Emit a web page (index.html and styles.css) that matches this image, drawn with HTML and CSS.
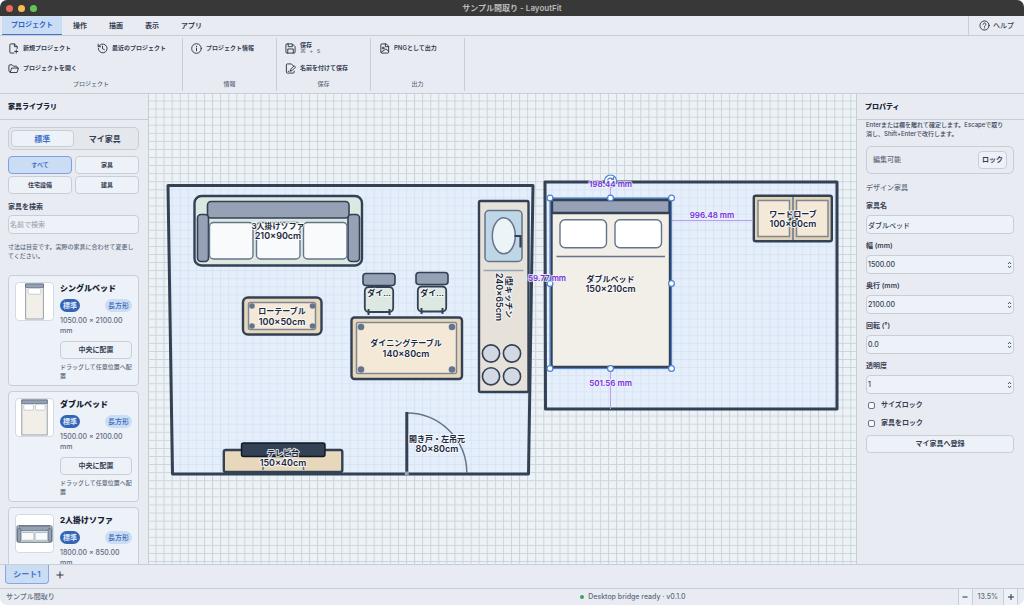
FILE: index.html
```html
<!DOCTYPE html>
<html lang="ja">
<head>
<meta charset="utf-8">
<meta name="viewport" content="width=device-width, initial-scale=1">
<title>サンプル間取り - LayoutFit</title>
<link rel="stylesheet" href="styles.css">
</head>
<body>
<svg class="defs" aria-hidden="true">
  <symbol id="spin" viewBox="0 0 5 8"><path d="M1 3 2.500 1.200 4 3M1 5 2.500 6.800 4 5" fill="none" stroke="#475569" stroke-width="1"/></symbol>
</svg>
<div class="app">
  <header class="titlebar">
    <div class="lights"><i class="light red"></i><i class="light yellow"></i><i class="light green"></i></div>
    <h1 class="window-title">サンプル間取り - LayoutFit</h1>
  </header>

  <nav class="menubar">
    <button class="menu active">プロジェクト</button>
    <button class="menu">操作</button>
    <button class="menu">描画</button>
    <button class="menu">表示</button>
    <button class="menu">アプリ</button>
    <button class="help">
      <svg class="icon" viewBox="0 0 24 24"><circle cx="12" cy="12" r="10"/><path d="M9 9.500a3 3 0 1 1 4.500 2.600c-1 .6-1.500 1-1.500 2M12 17v.5"/></svg>ヘルプ
    </button>
  </nav>

  <section class="ribbon">
    <div class="group wide">
      <div class="tools two">
        <button class="tool"><svg class="icon" viewBox="0 0 24 24"><path d="M20 12V8l-6-6H6a2 2 0 0 0-2 2v16a2 2 0 0 0 2 2h7M14 2v6h6M18 15v7M14.500 18.500h7"/></svg>新規プロジェクト</button>
        <button class="tool"><svg class="icon" viewBox="0 0 24 24"><path d="M3 12a9.500 9.500 0 1 0 3-7L2.500 8M2.500 2.500V8H8M12 7v5.500l4 2"/></svg>最近のプロジェクト</button>
        <button class="tool"><svg class="icon" viewBox="0 0 24 24"><path d="M5 20l3-9h15l-3 9zM5 20a3 3 0 0 1-3-3V6a2 2 0 0 1 2-2h5l3 3h6a2 2 0 0 1 2 2v2"/></svg>プロジェクトを開く</button>
      </div>
      <span class="caption">プロジェクト</span>
    </div>
    <div class="group">
      <div class="tools">
        <button class="tool"><svg class="icon" viewBox="0 0 24 24"><circle cx="12" cy="12" r="10.500"/><path d="M12 11v6M12 7v1"/></svg>プロジェクト情報</button>
      </div>
      <span class="caption">情報</span>
    </div>
    <div class="group">
      <div class="tools">
        <button class="tool"><svg class="icon" viewBox="0 0 24 24"><path d="M5 2h11l6 6v12a2 2 0 0 1-2 2H4a2 2 0 0 1-2-2V4a2 2 0 0 1 2-2zM7 2v6h9V3M6 22v-9h12v9"/></svg><span class="stack">保存<kbd>⌘ + S</kbd></span></button>
        <button class="tool"><svg class="icon" viewBox="0 0 24 24"><path d="M18 6l-4-4H5a2 2 0 0 0-2 2v16a2 2 0 0 0 2 2h13a2 2 0 0 0 2-2v-2M12 17l1-4 7-7 3 3-7 7zM7 18h2"/></svg>名前を付けて保存</button>
      </div>
      <span class="caption">保存</span>
    </div>
    <div class="group">
      <div class="tools">
        <button class="tool"><svg class="icon" viewBox="0 0 24 24"><path d="M15 2H6a2 2 0 0 0-2 2v16a2 2 0 0 0 2 2h13a2 2 0 0 0 2-2V8zM14 2v6h7M5 20l10-7 6 5"/><circle cx="9" cy="11" r="2"/></svg>PNGとして出力</button>
      </div>
      <span class="caption">出力</span>
    </div>
  </section>

  <main class="workspace">
    <aside class="panel library">
      <h2 class="panel-title">家具ライブラリ</h2>
      <div class="library-body">
        <div class="segmented">
          <button class="segment active">標準</button>
          <button class="segment">マイ家具</button>
        </div>
        <div class="filters">
          <button class="filter active">すべて</button>
          <button class="filter">家具</button>
          <button class="filter">住宅設備</button>
          <button class="filter">建具</button>
        </div>
        <div class="search">
          <label for="search">家具を検索</label>
          <input class="input" id="search" type="text" placeholder="名前で検索">
        </div>
        <p class="note">寸法は目安です。実際の家具に合わせて変更してください。</p>
        <div class="cards">
          <article class="card">
            <svg class="thumb" viewBox="0 0 38 38"><rect x="10" y="1" width="18" height="36" fill="#f1efe7" stroke="#64748b" stroke-width=".7"/><rect x="10" y="1" width="18" height="3.500" fill="#94a0b6" stroke="#475569" stroke-width=".6"/><rect x="12.500" y="5.500" width="13" height="6" rx="1.500" fill="#fff" stroke="#94a3b8" stroke-width=".5"/></svg>
            <div class="card-body">
              <h3 class="card-title">シングルベッド</h3>
              <div class="badges"><span class="badge solid">標準</span><span class="badge">長方形</span></div>
              <p class="size">1050.00 × 2100.00 mm</p>
              <button class="button">中央に配置</button>
              <p class="hint">ドラッグして任意位置へ配置</p>
            </div>
          </article>
          <article class="card">
            <svg class="thumb" viewBox="0 0 38 38"><rect x="6" y="1" width="26" height="36" fill="#f1efe7" stroke="#64748b" stroke-width=".7"/><rect x="6" y="1" width="26" height="3.500" fill="#94a0b6" stroke="#475569" stroke-width=".6"/><rect x="8" y="5.500" width="10" height="6" rx="1.500" fill="#fff" stroke="#94a3b8" stroke-width=".5"/><rect x="20" y="5.500" width="10" height="6" rx="1.500" fill="#fff" stroke="#94a3b8" stroke-width=".5"/></svg>
            <div class="card-body">
              <h3 class="card-title">ダブルベッド</h3>
              <div class="badges"><span class="badge solid">標準</span><span class="badge">長方形</span></div>
              <p class="size">1500.00 × 2100.00 mm</p>
              <button class="button">中央に配置</button>
              <p class="hint">ドラッグして任意位置へ配置</p>
            </div>
          </article>
          <article class="card">
            <svg class="thumb" viewBox="0 0 38 38"><rect x="1" y="11" width="36" height="17" rx="1.500" fill="#dce8e1" stroke="#334155" stroke-width=".8"/><g fill="#94a0b6" stroke="#475569" stroke-width=".6"><rect x="3" y="11.500" width="32" height="4.500" rx="1"/><rect x="1.500" y="14" width="3.500" height="13" rx="1"/><rect x="33" y="14" width="3.500" height="13" rx="1"/></g><g fill="#f8fafc" stroke="#94a3b8" stroke-width=".7"><rect x="5.500" y="18" width="13" height="8" rx="1"/><rect x="19.500" y="18" width="13" height="8" rx="1"/></g></svg>
            <div class="card-body">
              <h3 class="card-title">2人掛けソファ</h3>
              <div class="badges"><span class="badge solid">標準</span><span class="badge">長方形</span></div>
              <p class="size">1800.00 × 850.00 mm</p>
              <button class="button">中央に配置</button>
              <p class="hint">ドラッグして任意位置へ配置</p>
            </div>
          </article>
        </div>
      </div>
    </aside>

    <section class="canvas">
      <svg class="plan" role="img" aria-label="間取り図">
        <defs>
          <pattern id="grid" x="155.500" y="100.500" width="8.080" height="8.080" patternUnits="userSpaceOnUse"><path d="M0 .5H8.080M.5 0V8.080" class="grid-line"/></pattern>
        </defs>
        <g transform="translate(-149 -94)">
          <rect x="149" y="94" width="4000" height="3000" fill="url(#grid)"/>
          <path class="room" d="M168 185.500H533L528.500 474H172.500z"/>
          <path class="room" d="M545 182H837V409H545.500z"/>

          <g class="furniture">
            <rect class="mint" x="194.500" y="196" width="167.500" height="69.500" rx="7"/>
            <g class="slate"><rect x="207.500" y="201.500" width="141.500" height="16.500" rx="3.500"/><rect x="197.500" y="214.500" width="11" height="47" rx="3.500"/><rect x="348" y="214.500" width="11.500" height="47" rx="3.500"/></g>
            <g class="cushion"><rect x="209.500" y="222.500" width="43.500" height="36.500" rx="4"/><rect x="256.500" y="222.500" width="43.500" height="36.500" rx="4"/><rect x="303.500" y="222.500" width="43.500" height="36.500" rx="4"/></g>
          </g>

          <g class="furniture">
            <rect class="wood" x="243" y="297.500" width="78.500" height="37" rx="5"/>
            <rect class="top" x="248.500" y="302.500" width="67" height="27" rx="2"/>
            <g class="bolt"><circle cx="252" cy="306" r="2.800"/><circle cx="312.500" cy="306" r="2.800"/><circle cx="252" cy="326" r="2.800"/><circle cx="312.500" cy="326" r="2.800"/></g>
          </g>

          <g class="furniture">
            <rect class="mint thin" x="364.800" y="287" width="28.400" height="25" rx="4"/>
            <rect class="mint thin" x="417.800" y="286.500" width="28.400" height="25" rx="4"/>
            <g class="slate"><rect x="363" y="273.500" width="32" height="12" rx="3"/><rect x="416" y="272.500" width="32" height="12" rx="3"/></g>
            <path class="leg" d="M368.500 309v6M389.500 309v6M421.500 308v6M442.500 308v6"/>
          </g>

          <g class="furniture">
            <rect class="wood" x="351.500" y="317.500" width="110.500" height="61.500" rx="3"/>
            <rect class="top" x="356.500" y="322.500" width="100" height="51" rx="1.500"/>
            <g class="bolt"><circle cx="361" cy="327" r="3.300"/><circle cx="452" cy="327" r="3.300"/><circle cx="361" cy="369.500" r="3.300"/><circle cx="452" cy="369.500" r="3.300"/></g>
          </g>

          <g class="furniture">
            <rect class="stone" x="479" y="201" width="49.500" height="191" rx="1.500"/>
            <rect class="sink" x="485" y="210.500" width="37" height="51" rx="4"/>
            <ellipse class="basin" cx="503.800" cy="235.800" rx="11.500" ry="18"/>
            <path class="faucet" d="M514.500 236H520.500V247.500"/>
            <path class="divide light-line" d="M483.500 270.500H523.500"/>
            <g class="burner"><circle cx="491" cy="353.500" r="8.600"/><circle cx="512" cy="353.500" r="8.600"/><circle cx="491" cy="376.300" r="8.600"/><circle cx="512" cy="376.300" r="8.600"/></g>
          </g>

          <g class="furniture">
            <rect class="bed" x="551.500" y="199.500" width="118.500" height="167.500" rx="2"/>
            <rect class="slate-flat" x="552" y="200" width="117.500" height="13" rx="1"/>
            <g class="cushion pillow"><rect x="560" y="219.800" width="46.500" height="28" rx="5"/><rect x="615" y="219.800" width="46.500" height="28" rx="5"/></g>
            <path class="divide" d="M556.500 256.500H665"/>
          </g>

          <g class="furniture">
            <rect class="wood dark" x="753.800" y="195.800" width="78" height="45.500" rx="2"/>
            <rect class="top" x="758" y="200.500" width="31.500" height="36"/>
            <rect class="top" x="796.500" y="200.500" width="31.500" height="36"/>
            <path class="divide" d="M793 197V240"/>
            <g fill="#334155"><circle cx="790" cy="219" r="1.500"/><circle cx="796.500" cy="219" r="1.500"/></g>
          </g>

          <g class="furniture">
            <rect class="wood" x="223.800" y="450" width="118.500" height="22" rx="2"/>
            <rect class="screen" x="241.500" y="443" width="83.500" height="13.500" rx="2"/>
            <path class="divide" d="M263 465v5M303.500 465v5"/>
          </g>

          <path class="arc" d="M406.800 413A60 60 0 0 1 466.800 473"/>
          <path class="door" d="M406.800 412V473"/>
          <rect x="404.800" y="471.500" width="4" height="4" fill="#94a0b6"/>

          <g class="label">
            <text x="278" y="229">3人掛けソファ</text><text class="measure-text" x="278" y="239">210×90cm</text>
            <text x="282" y="314">ローテーブル</text><text class="measure-text" x="282" y="324.500">100×50cm</text>
            <text x="379" y="296">ダイ…</text><text x="432" y="295.500">ダイ…</text>
            <text x="406" y="346">ダイニングテーブル</text><text class="measure-text" x="406" y="356.500">140×80cm</text>
            <text x="610.500" y="281.500">ダブルベッド</text><text class="measure-text" x="610.500" y="292">150×210cm</text>
            <text x="793" y="216.500">ワードローブ</text><text class="measure-text" x="793" y="227">100×60cm</text>
            <text x="283" y="456">テレビ台</text><text class="measure-text" x="283" y="466">150×40cm</text>
            <text x="437" y="441.500">開き戸・左吊元</text><text class="measure-text" x="437" y="452">80×80cm</text>
            <g transform="translate(506 297) rotate(90)"><text x="0" y="0">I型キッチン</text><text class="measure-text" x="0" y="10">240×65cm</text></g>
          </g>

          <path class="measure" d="M610.500 182V198M610.500 368V409M671 220.500H753M546 283.500H550"/>
          <rect class="selection" x="550" y="198" width="121.500" height="170.500"/>
          <g class="handle">
            <circle cx="550" cy="198" r="2.900"/><circle cx="610.500" cy="198" r="2.900"/><circle cx="671.500" cy="198" r="2.900"/>
            <circle cx="550" cy="283.500" r="2.900"/><circle cx="671.500" cy="283.500" r="2.900"/>
            <circle cx="550" cy="368.500" r="2.900"/><circle cx="610.500" cy="368.500" r="2.900"/><circle cx="671.500" cy="368.500" r="2.900"/>
            <circle cx="610.500" cy="181" r="6"/>
            <path fill="none" d="M613.500 181a3 3 0 1 1-1-2.200M613.500 177v2.500h-2.500"/>
          </g>
          <g class="dimension">
            <text x="610.500" y="187">198.44 mm</text><text x="712" y="217.500">996.48 mm</text>
            <text x="547" y="280.500">59.77 mm</text><text x="610.500" y="386">501.56 mm</text>
          </g>
        </g>
      </svg>
    </section>

    <aside class="panel properties">
      <h2 class="panel-title">プロパティ</h2>
      <form class="form">
        <p class="note dark">Enterまたは欄を離れて確定します。Escapeで取り消し、Shift+Enterで改行します。</p>
        <div class="lockbox"><span>編集可能</span><button class="button" type="button">ロック</button></div>
        <h3 class="section-title">デザイン家具</h3>
        <div class="field"><label for="name">家具名</label><div class="control"><input class="input" id="name" type="text" value="ダブルベッド"></div></div>
        <div class="field"><label for="w">幅 (mm)</label><div class="control"><input class="input" id="w" type="number" step="0.01" value="1500.00"><svg class="spin"><use href="#spin"/></svg></div></div>
        <div class="field"><label for="d">奥行 (mm)</label><div class="control"><input class="input" id="d" type="number" step="0.01" value="2100.00"><svg class="spin"><use href="#spin"/></svg></div></div>
        <div class="field"><label for="r">回転 (°)</label><div class="control"><input class="input" id="r" type="number" step="0.1" value="0.0"><svg class="spin"><use href="#spin"/></svg></div></div>
        <div class="field"><label for="o">透明度</label><div class="control"><input class="input" id="o" type="number" value="1"><svg class="spin"><use href="#spin"/></svg></div></div>
        <label class="check"><input type="checkbox">サイズロック</label>
        <label class="check"><input type="checkbox">家具をロック</label>
        <button class="button register" type="button">マイ家具へ登録</button>
      </form>
    </aside>
  </main>

  <nav class="sheets">
    <button class="sheet">シート1</button>
    <button class="add" aria-label="シートを追加"><svg viewBox="0 0 8 8"><path d="M4 .5v7M.5 4h7"/></svg></button>
  </nav>

  <footer class="status">
    <span>サンプル間取り</span>
    <span class="status-ready"><i class="dot"></i>Desktop bridge ready · v0.1.0</span>
    <div class="zoom">
      <button class="zoom-button" aria-label="縮小"><svg viewBox="0 0 8 8"><path d="M1.500 4h5"/></svg></button>
      <span class="zoom-value">13.5%</span>
      <button class="zoom-button" aria-label="拡大"><svg viewBox="0 0 8 8"><path d="M4 1v6M1 4h6"/></svg></button>
    </div>
  </footer>
</div>
</body>
</html>
```

FILE: styles.css
```css
* { box-sizing: border-box; margin: 0; padding: 0; }

:root {
  --panel: #e8ecf2;
  --surface: #edf1f8;
  --line: #c9ced6;
  --ink: #364052;
  --muted: #5f6b7d;
  --blue: #4474c9;
  --blue-soft: #cbdcf5;
}

body {
  background: #fff;
  color: var(--ink);
  font: 500 7px/10px Inter, "Noto Sans CJK JP", sans-serif;
}

button, input, kbd { font: inherit; color: inherit; }
button { background: none; border: 0; white-space: nowrap; }
.defs { display: none; }

.app {
  display: flex;
  flex-direction: column;
  height: 100vh;
  overflow: hidden;
  border-radius: 7px;
  background: var(--panel);
}

/* Title bar */
.titlebar {
  display: grid;
  grid-template-columns: 1fr auto 1fr;
  align-items: center;
  height: 16px;
  padding: 0 6px;
  background: #383838;
}
.lights { display: flex; gap: 5px; }
.light { width: 7px; height: 7px; border-radius: 50%; }
.red { background: #ec6a5e; }
.yellow { background: #f4bf4f; }
.green { background: #61c554; }
.window-title { color: #bcbcbc; font-size: 8px; font-weight: 600; }

/* Menu */
.menubar {
  display: flex;
  height: 20px;
  padding-left: 2px;
  border-bottom: 1px solid var(--line);
}
.menu { padding: 0 11px; font-weight: 600; }
.menu.active {
  padding: 0 9px;
  background: var(--blue-soft);
  border-bottom: 1px solid var(--blue);
  color: #2f66c4;
  font-weight: 700;
}
.help {
  display: flex;
  align-items: center;
  gap: 3px;
  margin-left: auto;
  padding: 0 10px;
  border-left: 1px solid var(--line);
}
.icon {
  flex: none;
  width: 11px;
  height: 11px;
  fill: none;
  stroke: #2b3040;
  stroke-width: 2;
  stroke-linecap: round;
  stroke-linejoin: round;
}

/* Ribbon */
.ribbon {
  display: flex;
  height: 58px;
  padding: 2px 0;
  border-bottom: 1px solid var(--line);
}
.group {
  display: flex;
  flex-direction: column;
  justify-content: space-between;
  width: 94px;
  padding: 0 8px 2px;
  border-right: 1px solid var(--line);
}
.group.wide { width: 183px; }
.tools { display: grid; grid-auto-rows: 20px; }
.tools.two { grid-template-columns: 89px auto; }
.tool {
  display: flex;
  align-items: center;
  gap: 4px;
  font-size: 6px;
  font-weight: 600;
}
.stack { display: grid; line-height: 7px; text-align: left; }
.stack kbd { color: var(--muted); font: 6px/7px "Liberation Mono", "DejaVu Sans", monospace; }
.caption { color: var(--muted); font-size: 6px; text-align: center; }

/* Workspace */
.workspace { display: flex; flex: 1; min-height: 0; }
.panel { display: flex; flex-direction: column; flex: none; overflow: hidden; }
.library { width: 149px; border-right: 1px solid var(--line); }
.properties { width: 168px; border-left: 1px solid var(--line); }
.panel-title {
  flex: none;
  padding: 0 8px;
  border-bottom: 1px solid var(--line);
  color: #1b2434;
  font-size: 7px;
  font-weight: 800;
  line-height: 25px;
}

.library-body { flex: 1; min-height: 0; padding: 7px 9px 0 8px; overflow-y: auto; scrollbar-width: none; }
.segmented {
  display: grid;
  grid-template-columns: 1fr 1fr;
  height: 23px;
  padding: 2px;
  border: 1px solid var(--line);
  border-radius: 5px;
  background: #e4e7ec;
}
.segment { border: 1px solid transparent; border-radius: 4px; font-size: 8px; font-weight: 600; }
.segment.active { border-color: var(--line); background: var(--surface); color: var(--blue); font-weight: 700; }
.filters { display: grid; grid-template-columns: 1fr 1fr; grid-auto-rows: 18px; gap: 2px 3px; margin-top: 6px; }
.filter { border: 1px solid var(--line); border-radius: 4px; background: var(--surface); font-size: 6px; font-weight: 600; }
.filter.active { border-color: #7ea0dc; background: var(--blue-soft); color: var(--blue); }
.search { display: grid; gap: 3px; margin-top: 8px; font-weight: 600; }
.input {
  width: 100%;
  height: 19px;
  padding: 0 1px;
  border: 1px solid var(--line);
  border-radius: 4px;
  background: var(--surface);
  font-weight: 500;
  appearance: textfield;
}
.input::-webkit-inner-spin-button { appearance: none; }
.input::placeholder { color: #a3a7ae; }
.note { margin-top: 8px; color: var(--muted); font-size: 6px; line-height: 9px; }
.note.dark { margin-top: 0; padding-right: 8px; color: #39455a; }

.cards { display: grid; gap: 5px; margin-top: 15px; }
.card {
  display: flex;
  gap: 6px;
  padding: 6px 6px 5px;
  border: 1px solid var(--line);
  border-radius: 4px;
  background: var(--surface);
}
.thumb { flex: none; width: 39px; height: 39px; border: 1px solid #d5dae1; border-radius: 4px; background: #fff; }
.card-body { flex: 1; min-width: 0; }
.card-title { color: #141d2d; font-size: 8px; font-weight: 800; line-height: 12px; }
.badges { display: flex; justify-content: space-between; margin: 5px 0 4px; }
.badge { padding: 0 3px; border-radius: 7px; background: var(--blue-soft); color: #3867b8; line-height: 13px; }
.badge.solid { background: #3564b4; color: #dce8fb; font-weight: 600; }
.size { color: var(--muted); }
.button {
  height: 18px;
  padding: 0 3px;
  border: 1px solid var(--line);
  border-radius: 4px;
  background: var(--surface);
  font-weight: 600;
}
.card .button { display: block; width: 100%; margin: 5px 0 3px; }
.hint { color: var(--muted); font-size: 6px; line-height: 9px; }

/* Properties */
.form { display: flex; flex-direction: column; padding: 0 10px 0 9px; }
.lockbox {
  display: flex;
  align-items: center;
  justify-content: space-between;
  height: 28px;
  margin-top: 8px;
  padding: 0 6px;
  border: 1px solid var(--line);
  border-radius: 5px;
  color: var(--muted);
}
.lockbox .button { color: var(--ink); }
.section-title { margin-top: 9px; color: var(--muted); font-size: 7px; font-weight: 500; }
.field { display: grid; gap: 4px; margin-top: 7px; font-weight: 600; }
.control { position: relative; }
.spin { position: absolute; top: 6px; right: 2px; width: 5px; height: 8px; }
.check { display: flex; align-items: center; gap: 6px; margin-top: 8px; padding-left: 2px; font-weight: 600; }
.section-title + .field { margin-top: 8px; }
.field + .check { margin-top: 6px; }
.check input {
  width: 7px;
  height: 7px;
  border: 1px solid #6b7280;
  border-radius: 2px;
  background: #f8fafc;
  appearance: none;
}
.check input:checked { background: var(--blue); }
.register { margin-top: 7px; }

/* Floor plan */
.canvas { flex: 1; min-width: 0; overflow: hidden; background: #edf2f6; }
.plan { display: block; width: 100%; height: 100%; }
.grid-line { fill: none; stroke: #cbd4dc; stroke-width: 1; }
.room { fill: #e0ebfd; fill-opacity: .65; stroke: #334155; stroke-width: 3; stroke-linejoin: round; }
.furniture > rect { stroke: #334155; stroke-width: 2.400; }
.mint { fill: #dce8e1; }
.wood { fill: #e7d8bc; }
.wood.dark { fill: #e1d2b6; }
.stone { fill: #e6e2da; }
.bed { fill: #f1efe7; }
.furniture > .thin { stroke-width: 1.800; }
.slate rect, .slate-flat { fill: #96a1b6; stroke: #334155; stroke-width: 1.600; }
.cushion rect { fill: #f8fafc; stroke: #64748b; stroke-width: 1.400; }
.pillow rect { fill: #fff; }
.furniture > .top { fill: #f4e8d6; stroke: #7f8797; stroke-width: 1.500; }
.bolt { fill: #64748b; }
.leg { stroke: #334155; stroke-width: 2; }
.furniture > .sink { fill: #bfd6e6; stroke: #64748b; stroke-width: 1.500; }
.basin { fill: #edf4f7; stroke: #64748b; stroke-width: 1.500; }
.faucet { fill: none; stroke: #334155; stroke-width: 2.200; }
.divide { fill: none; stroke: #64748b; stroke-width: 1.500; }
.light-line { stroke: #94a3b8; }
.burner { fill: #d3d9e2; stroke: #334155; stroke-width: 1.600; }
.furniture > .screen { fill: #334155; stroke: #0f172a; stroke-width: 1.400; }
.arc { fill: none; stroke: #64748b; stroke-width: 1.500; }
.door { stroke: #334155; stroke-width: 3; }
.label text {
  fill: #1e293b;
  stroke: #f8fafc;
  stroke-opacity: .85;
  stroke-width: 2;
  stroke-linejoin: round;
  paint-order: stroke;
  font-size: 8px;
  font-weight: 600;
  text-anchor: middle;
}
.label .measure-text { font-size: 9px; }
.measure { fill: none; stroke: #b79cf0; stroke-width: 1; }
.selection { fill: none; stroke: #4d82d6; stroke-width: 1.200; }
.handle { fill: #fff; stroke: #4d82d6; stroke-width: 1.200; }
.dimension text {
  fill: #7434dc;
  stroke: #f3f0fd;
  stroke-opacity: .8;
  stroke-width: 2;
  paint-order: stroke;
  font-size: 8px;
  font-weight: 600;
  text-anchor: middle;
}

/* Sheets and status */
.sheets {
  display: flex;
  gap: 7px;
  height: 24px;
  padding: 0 5px 4px;
  border-top: 1px solid var(--line);
}
.sheet {
  width: 44px;
  border: 1px solid #86a8e2;
  border-top: 0;
  border-radius: 0 0 4px 4px;
  background: var(--blue-soft);
  color: var(--blue);
  font-size: 8px;
  font-weight: 600;
}
.add svg, .zoom-button svg { display: block; width: 8px; height: 8px; stroke: #2b3040; stroke-width: 1; }
.status {
  display: grid;
  grid-template-columns: 19fr auto 11fr;
  align-items: center;
  height: 17px;
  padding: 0 6px;
  border-top: 1px solid var(--line);
  color: var(--muted);
}
.status-ready { display: flex; align-items: center; gap: 4px; }
.dot { width: 4px; height: 4px; border-radius: 50%; background: #3aa35c; }
.zoom { display: flex; align-items: center; justify-content: flex-end; align-self: stretch; }
.zoom-button { display: grid; place-items: center; align-self: stretch; width: 15px; border: solid var(--line); border-width: 0 1px; background: var(--surface); }
.zoom-value { padding: 0 5px; }
```
